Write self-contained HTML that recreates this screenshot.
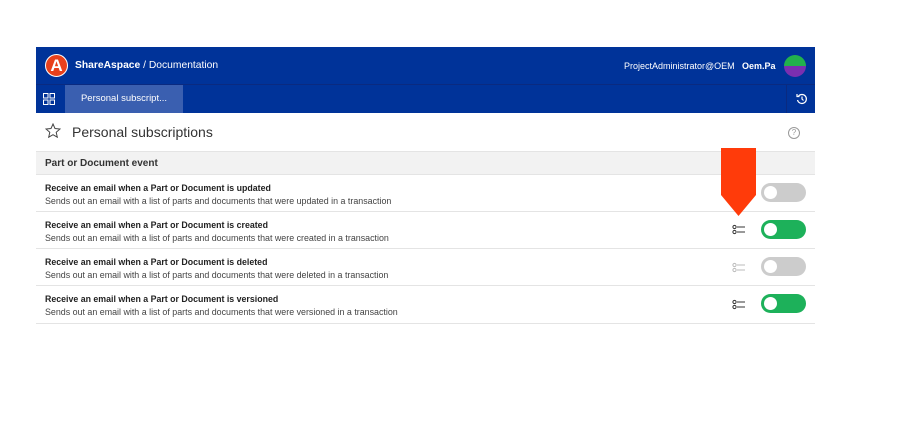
<!DOCTYPE html>
<html><head><style>
body{margin:0;width:898px;height:437px;background:#fff;font-family:"Liberation Sans",sans-serif;position:relative;overflow:hidden}
.abs{position:absolute}
.top{left:36px;top:47px;width:779px;height:37px;background:#003399}
.bar{left:36px;top:84px;width:779px;height:29px;background:#003399;border-top:1px solid #0a2a80;box-sizing:border-box}
.tab{left:65px;top:85px;width:118px;height:28px;background:#3a5fb0;color:#fff;font-size:9.5px;line-height:28px;text-align:center}
.row{left:36px;width:779px;border-bottom:1px solid #e4e4e4;box-sizing:border-box}
.t1{position:absolute;left:9px;font-size:8.8px;font-weight:bold;color:#222}
.t2{position:absolute;left:9px;font-size:8.9px;color:#444}
.tog{position:absolute;left:725px;width:45px;height:19px;border-radius:10px}
.tog:after{content:"";position:absolute;left:3px;top:3px;width:13px;height:13px;border-radius:50%;background:#fff}
</style></head><body>
<div class="abs top"></div>
<div class="abs" style="left:45px;top:54px;width:23px;height:23px;border-radius:50%;background:#e8401c;border:1px solid #fff;box-sizing:border-box;color:#fff;font-weight:bold;font-size:17px;text-align:center;line-height:22px">A</div>
<div class="abs" style="left:75px;top:60px;color:#fff;font-size:10.3px"><b>ShareAspace</b> / Documentation</div>
<div class="abs" style="left:624px;top:61px;color:#fff;font-size:9px">ProjectAdministrator@OEM</div>
<div class="abs" style="left:742px;top:61px;color:#fff;font-size:9px;font-weight:bold">Oem.Pa</div>
<div class="abs" style="left:784px;top:55px;width:22px;height:22px;border-radius:50%;background:linear-gradient(#22b14c 50%,#7a2fb0 50%)"></div>
<div class="abs bar"></div>
<div class="abs tab">Personal subscript...</div>
<svg class="abs" style="left:43px;top:93px" width="12" height="12"><g fill="none" stroke="#fff" stroke-width="1"><rect x="0.5" y="0.5" width="4.5" height="4.5"/><rect x="7" y="0.5" width="4.5" height="4.5"/><rect x="0.5" y="7" width="4.5" height="4.5"/><rect x="7" y="7" width="4.5" height="4.5"/></g></svg>
<div class="abs" style="left:786px;top:84px;width:1px;height:29px;background:#0a2a80"></div>
<svg class="abs" style="left:796px;top:93px" width="12" height="12"><g fill="none" stroke="#fff" stroke-width="1.2"><path d="M2.5 3A4.5 4.5 0 1 1 1.5 7"/><path d="M1 1v2.5h2.5"/><path d="M6 3.5V6l1.5 1.5"/></g></svg>
<svg class="abs" style="left:45px;top:123px" width="16" height="15"><path d="M8 1l2 4.5 5 .5-3.8 3.3 1.1 4.9L8 11.7 3.7 14.2l1.1-4.9L1 6l5-.5z" fill="none" stroke="#444" stroke-width="1"/></svg>
<div class="abs" style="left:72px;top:124px;font-size:14px;color:#333">Personal subscriptions</div>
<div class="abs" style="left:788px;top:127px;width:10px;height:10px;border:1px solid #999;border-radius:50%;font-size:8px;color:#999;text-align:center;line-height:10px">?</div>
<div class="abs row" style="top:151px;height:24px;background:#f2f2f2;border-top:1px solid #e4e4e4"><span class="t1" style="top:6px;font-size:10px;font-weight:bold;color:#333">Part or Document event</span></div>
<div class="abs row" style="top:175px;height:37px"><span class="t1" style="top:8px">Receive an email when a Part or Document is updated</span><span class="t2" style="top:21px">Sends out an email with a list of parts and documents that were updated in a transaction</span><div class="tog" style="top:8px;background:#ccc"></div></div>
<div class="abs row" style="top:212px;height:37px"><span class="t1" style="top:8px">Receive an email when a Part or Document is created</span><span class="t2" style="top:21px">Sends out an email with a list of parts and documents that were created in a transaction</span><div class="tog" style="top:8px;background:#1db15a"></div></div>
<div class="abs row" style="top:249px;height:37px"><span class="t1" style="top:8px">Receive an email when a Part or Document is deleted</span><span class="t2" style="top:21px">Sends out an email with a list of parts and documents that were deleted in a transaction</span><div class="tog" style="top:8px;background:#ccc"></div></div>
<div class="abs row" style="top:286px;height:38px"><span class="t1" style="top:8px">Receive an email when a Part or Document is versioned</span><span class="t2" style="top:21px">Sends out an email with a list of parts and documents that were versioned in a transaction</span><div class="tog" style="top:8px;background:#1db15a"></div></div>
<svg class="abs" style="left:732px;top:224px" width="14" height="90">
<g fill="none" stroke="#333" stroke-width="1"><circle cx="2.5" cy="3" r="1.6"/><circle cx="2.5" cy="8" r="1.6"/><path d="M5 3h8M5 8h8"/></g>
<g fill="none" stroke="#bbb" stroke-width="1" transform="translate(0,38)"><circle cx="2.5" cy="3" r="1.6"/><circle cx="2.5" cy="8" r="1.6"/><path d="M5 3h8M5 8h8"/></g>
<g fill="none" stroke="#333" stroke-width="1" transform="translate(0,75)"><circle cx="2.5" cy="3" r="1.6"/><circle cx="2.5" cy="8" r="1.6"/><path d="M5 3h8M5 8h8"/></g>
</svg>
<svg class="abs" style="left:721px;top:148px" width="36" height="70"><path d="M0 0h35v47L17.5 68 0 47z" fill="#ff3b0a"/></svg>
</body></html>
